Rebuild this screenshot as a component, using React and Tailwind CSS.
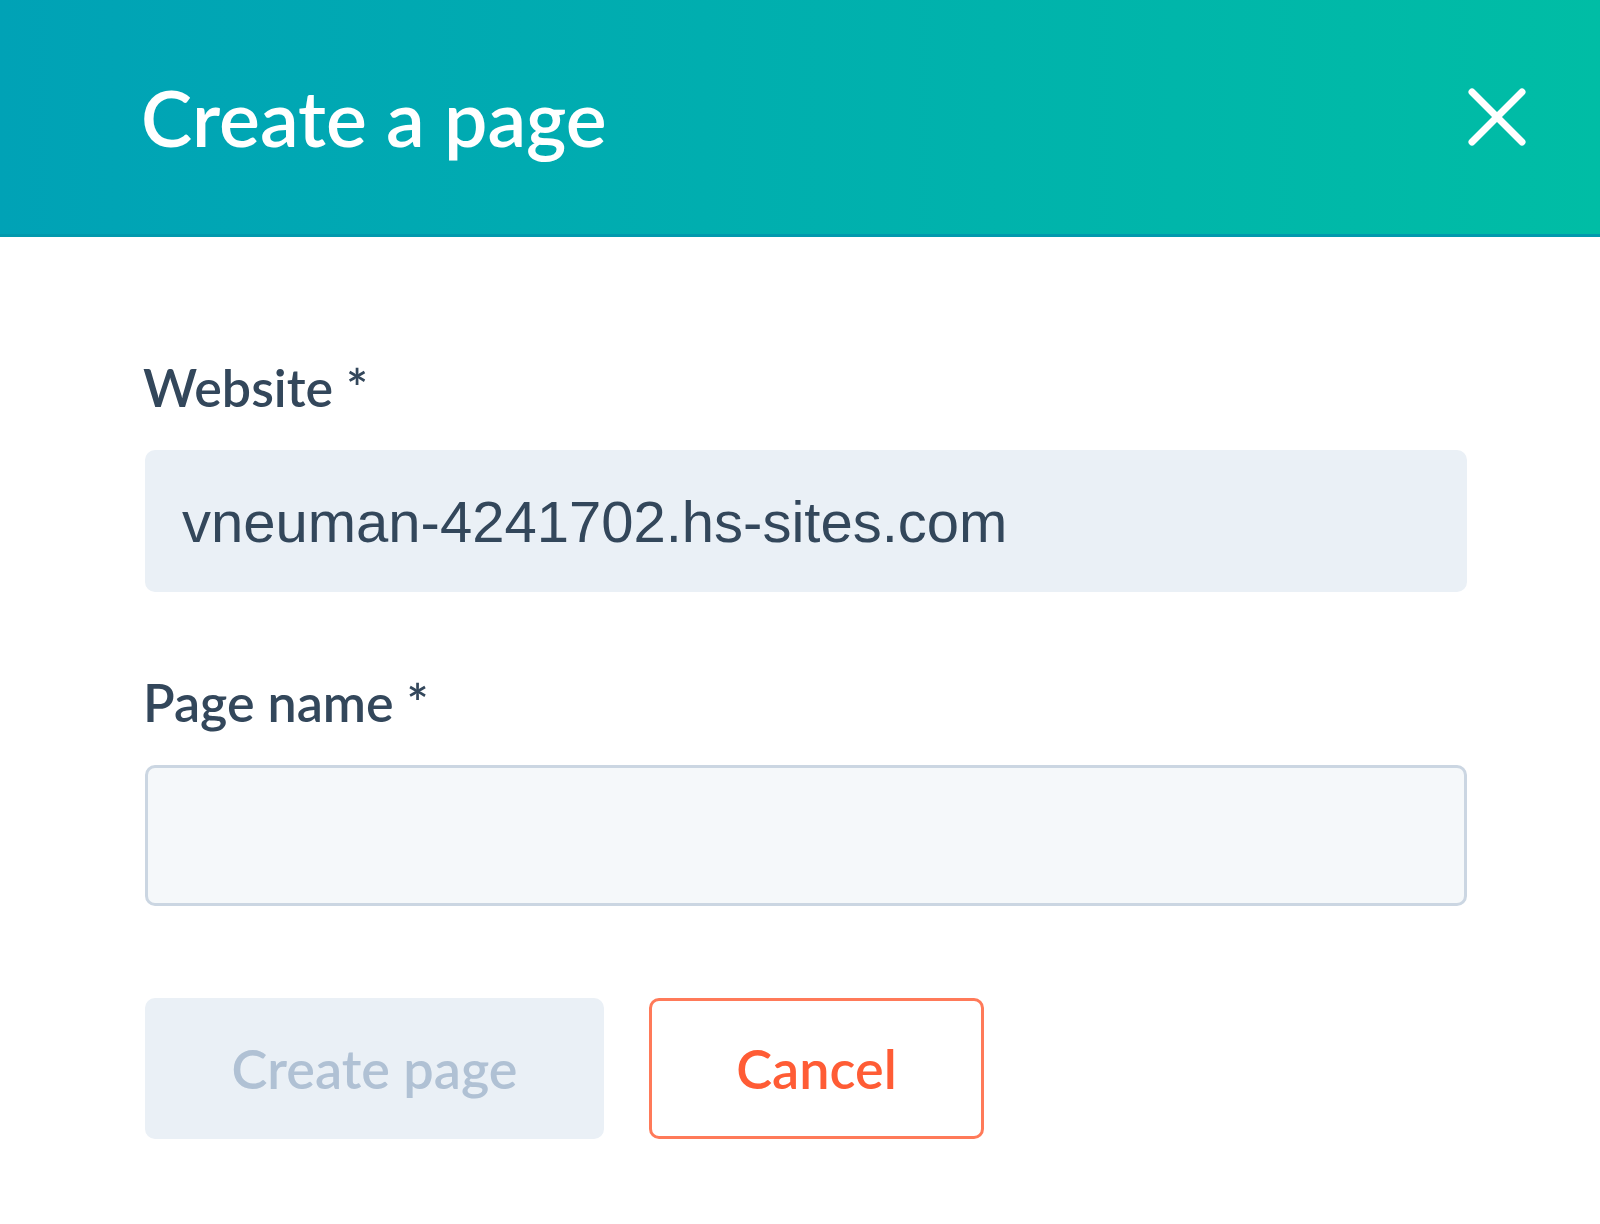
import React from 'react';

export default function App() {
  return (
    <div className="min-h-screen w-full bg-white font-['Lato',sans-serif]">
      {/* Header */}
      <div className="flex h-[237px] items-center justify-between border-b-[3px] border-[#0199ad] bg-gradient-to-r from-[#00a2b6] to-[#00bda5] pl-[141px] pr-[72px]">
        <h1 className="text-[77px] font-semibold leading-none text-white">Create a page</h1>
        <button className="flex h-[62px] w-[62px] items-center justify-center text-white">
          <svg viewBox="0 0 60 60" className="h-[60px] w-[60px]" fill="none" stroke="currentColor" strokeWidth="7" strokeLinecap="round">
            <path d="M5 5 L55 55" />
            <path d="M55 5 L5 55" />
          </svg>
        </button>
      </div>

      {/* Form */}
      <div className="flex flex-col px-[145px] pt-[124px]">
        <label className="ml-[-2px] mb-[37px] text-[52px] font-semibold leading-none text-[#33475b]">Website *</label>
        <div className="flex h-[142px] w-[1322px] items-center rounded-[10px] bg-[#eaf0f6] px-[37px] font-['Liberation_Sans',sans-serif] text-[58px] text-[#33475b]">
          vneuman-4241702.hs-sites.com
        </div>

        <label className="ml-[-2px] mt-[84px] mb-[37px] text-[52px] font-semibold leading-none text-[#33475b]">Page name *</label>
        <input
          type="text"
          className="h-[141px] w-[1322px] rounded-[10px] border-[3px] border-[#cbd6e2] bg-[#f5f8fa] px-[37px] text-[58px] text-[#33475b] outline-none"
        />

        <div className="mt-[92px] flex gap-[45px]">
          <button className="flex h-[141px] w-[459px] items-center justify-center rounded-[10px] bg-[#eaf0f6] text-[54px] font-semibold text-[#b0c1d4]">
            Create page
          </button>
          <button className="flex h-[141px] w-[335px] items-center justify-center rounded-[10px] border-[3px] border-[#ff7a59] bg-white text-[54px] font-semibold text-[#ff5c35]">
            Cancel
          </button>
        </div>
      </div>
    </div>
  );
}
